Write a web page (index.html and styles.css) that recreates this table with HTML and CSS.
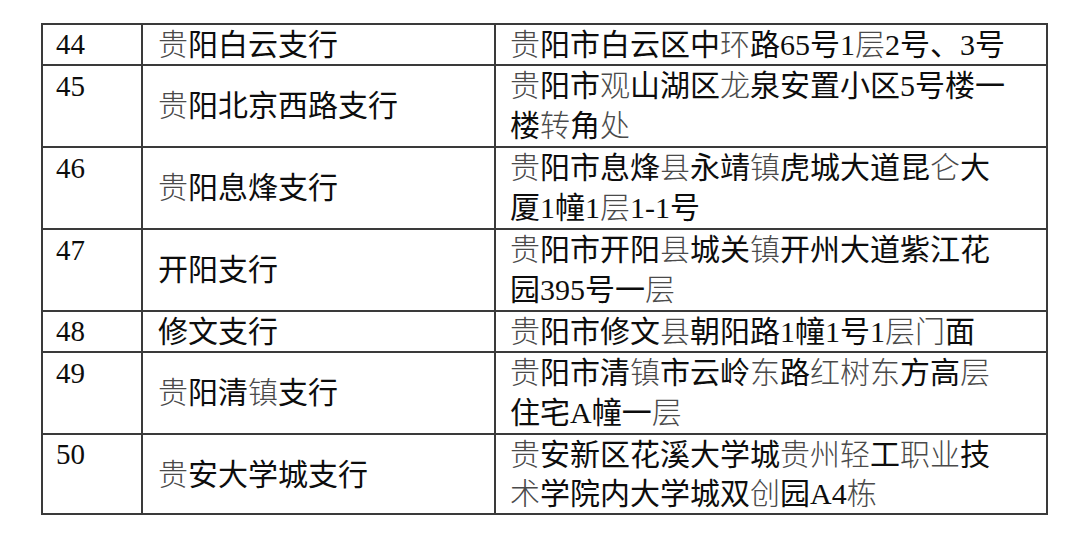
FILE: index.html
```html
<!DOCTYPE html>
<html lang="zh-CN">
<head>
<meta charset="utf-8">
<title>网点列表</title>
<link rel="stylesheet" href="styles.css">
</head>
<body>
<div class="page">
  <table class="branches">
    <colgroup>
      <col class="c-no">
      <col class="c-name">
      <col class="c-addr">
    </colgroup>
    <tbody>
      <tr class="single">
        <td class="no">44</td>
        <td class="name"><span class="lt">贵</span>阳白云支行</td>
        <td class="addr"><span class="lt">贵</span>阳市白云区中<span class="lt">环</span>路65号1<span class="lt">层</span>2号、3号</td>
      </tr>
      <tr>
        <td class="no">45</td>
        <td class="name"><span class="lt">贵</span>阳北京西路支行</td>
        <td class="addr"><span class="lt">贵</span>阳市<span class="lt">观</span>山湖区<span class="lt">龙</span>泉安置小区5号楼一<br>楼<span class="lt">转</span>角<span class="lt">处</span></td>
      </tr>
      <tr>
        <td class="no">46</td>
        <td class="name"><span class="lt">贵</span>阳息烽支行</td>
        <td class="addr"><span class="lt">贵</span>阳市息烽<span class="lt">县</span>永靖<span class="lt">镇</span>虎城大道昆<span class="lt">仑</span>大<br>厦1幢1<span class="lt">层</span>1-1号</td>
      </tr>
      <tr>
        <td class="no">47</td>
        <td class="name">开阳支行</td>
        <td class="addr"><span class="lt">贵</span>阳市开阳<span class="lt">县</span>城关<span class="lt">镇</span>开州大道紫江花<br>园395号一<span class="lt">层</span></td>
      </tr>
      <tr class="single">
        <td class="no">48</td>
        <td class="name">修文支行</td>
        <td class="addr"><span class="lt">贵</span>阳市修文<span class="lt">县</span>朝阳路1幢1号1<span class="lt">层门</span>面</td>
      </tr>
      <tr>
        <td class="no">49</td>
        <td class="name"><span class="lt">贵</span>阳清<span class="lt">镇</span>支行</td>
        <td class="addr"><span class="lt">贵</span>阳市清<span class="lt">镇</span>市云岭<span class="lt">东</span>路<span class="lt">红树东</span>方高<span class="lt">层</span><br>住宅A幢一<span class="lt">层</span></td>
      </tr>
      <tr class="tight">
        <td class="no">50</td>
        <td class="name"><span class="lt">贵</span>安大学城支行</td>
        <td class="addr"><span class="lt">贵</span>安新区花溪大学城<span class="lt">贵州轻</span>工<span class="lt">职业</span>技<br><span class="lt">术</span>学院内大学城双<span class="lt">创</span>园A4<span class="lt">栋</span></td>
      </tr>
    </tbody>
  </table>
</div>
</body>
</html>
```

FILE: styles.css
```css
html, body {
  margin: 0;
  padding: 0;
  background: #ffffff;
}

.page {
  padding: 23px 0 0 41px;
}

.branches {
  border-collapse: collapse;
  table-layout: fixed;
  width: 1005px;
  font-family: "Liberation Serif", "Noto Sans CJK SC", serif;
  font-size: 30px;
  line-height: 40px;
  color: #0d0d0d;
}

.single,
.tight {
  line-height: 39px;
}

.c-no { width: 100px; }
.c-name { width: 353px; }
.c-addr { width: 552px; }

.branches td {
  border: 2px solid #3a3a3a;
  padding: 0;
  white-space: nowrap;
}

.no {
  vertical-align: top;
  padding-left: 13px !important;
  font-size: 29px;
}

.name {
  vertical-align: middle;
  padding-left: 15px !important;
}

.addr {
  vertical-align: top;
  padding-left: 14px !important;
}

.lt {
  color: #4a4a4a;
  font-weight: 300;
}
```
